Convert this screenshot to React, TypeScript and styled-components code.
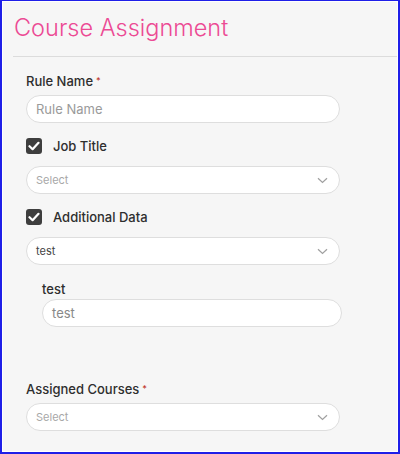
import React from "react";
import styled, { createGlobalStyle } from "styled-components";

const Global = createGlobalStyle`
  html, body { margin: 0; padding: 0; }
  body { font-family: "Inter", "Noto Sans", sans-serif; background: #f6f6f6; }
  * { box-sizing: border-box; }
`;

const Frame = styled.div`
  width: 400px;
  height: 454px;
  border: 2px solid #1f1fe8;
  border-top-width: 1px;
  background: #f6f6f6;
  box-shadow: inset 0 0 0 1px #ffffff;
  overflow: hidden;
`;

const Header = styled.div`
  padding: 11px 0 12px 1px;
  margin: 0 1px 0 11px;
  border-bottom: 1px solid #dcdcdc;
`;

const Title = styled.h1`
  margin: 0;
  font-size: 23.5px;
  font-weight: 300;
  color: #ec4a94;
  line-height: 32px;
`;

const Body = styled.div`
  padding: 15px 0 0 24px;
  width: 340px;
  display: flex;
  flex-direction: column;
`;

const Label = styled.label<{ $indent?: boolean; $gap: number }>`
  display: block;
  font-size: 13px;
  font-weight: 500;
  color: #2e2e2e;
  line-height: 18px;
  margin: 0 0 ${(p) => p.$gap}px ${(p) => (p.$indent ? "16px" : "0")};
`;

const Req = styled.span`
  color: #c0392b;
  font-size: 9px;
  vertical-align: top;
  margin-left: 3px;
`;

const Field = styled.div<{ $indent?: boolean; $wide?: boolean }>`
  height: 28px;
  flex: none;
  margin-left: ${(p) => (p.$indent ? "16px" : "0")};
  width: ${(p) => (p.$wide ? "300px" : "314px")};
  background: #fff;
  border: 1px solid #dedede;
  border-radius: 14px;
  display: flex;
  align-items: center;
  padding: 0 11px 0 9px;
  justify-content: space-between;
`;

const Text = styled.span<{ $small?: boolean; $tone: string }>`
  font-size: ${(p) => (p.$small ? "11px" : "13px")};
  color: ${(p) => p.$tone};
`;

const CheckRow = styled.div`
  display: flex;
  align-items: center;
  gap: 11px;
  height: 16px;
  margin: 15px 0 12px;
`;

const Box = styled.span`
  width: 16px;
  height: 16px;
  border-radius: 3px;
  background: #3e3e3e;
  display: flex;
  align-items: center;
  justify-content: center;
`;

const CheckLabel = styled.span`
  font-size: 13px;
  font-weight: 500;
  color: #2e2e2e;
`;

const Spacer = styled.div<{ $h: number }>`
  height: ${(p) => p.$h}px;
  flex: none;
`;

const Chevron = () => (
  <svg width="11" height="7" viewBox="0 0 11 7">
    <path d="M1 1.2 L5.5 5.5 L10 1.2" fill="none" stroke="#a0a0a0" strokeWidth="1.2" />
  </svg>
);

const Check = () => (
  <svg width="12" height="10" viewBox="0 0 12 10">
    <path d="M1.5 5.2 L4.6 8.2 L10.5 1.8" fill="none" stroke="#fff" strokeWidth="2.2" strokeLinecap="round" strokeLinejoin="round" />
  </svg>
);

export default function App() {
  return (
    <>
      <Global />
      <Frame>
        <Header>
          <Title>Course Assignment</Title>
        </Header>
        <Body>
          <Label $gap={5}>
            Rule Name<Req>*</Req>
          </Label>
          <Field>
            <Text $tone="#9a9a9a">Rule Name</Text>
          </Field>
          <CheckRow>
            <Box>
              <Check />
            </Box>
            <CheckLabel>Job Title</CheckLabel>
          </CheckRow>
          <Field>
            <Text $small $tone="#a8a8a8">Select</Text>
            <Chevron />
          </Field>
          <CheckRow>
            <Box>
              <Check />
            </Box>
            <CheckLabel>Additional Data</CheckLabel>
          </CheckRow>
          <Field>
            <Text $small $tone="#444">test</Text>
            <Chevron />
          </Field>
          <Spacer $h={15} />
          <Label $indent $gap={1}>test</Label>
          <Field $indent $wide>
            <Text $tone="#888">test</Text>
          </Field>
          <Spacer $h={53} />
          <Label $gap={5}>
            Assigned Courses<Req>*</Req>
          </Label>
          <Field>
            <Text $small $tone="#a8a8a8">Select</Text>
            <Chevron />
          </Field>
        </Body>
      </Frame>
    </>
  );
}
